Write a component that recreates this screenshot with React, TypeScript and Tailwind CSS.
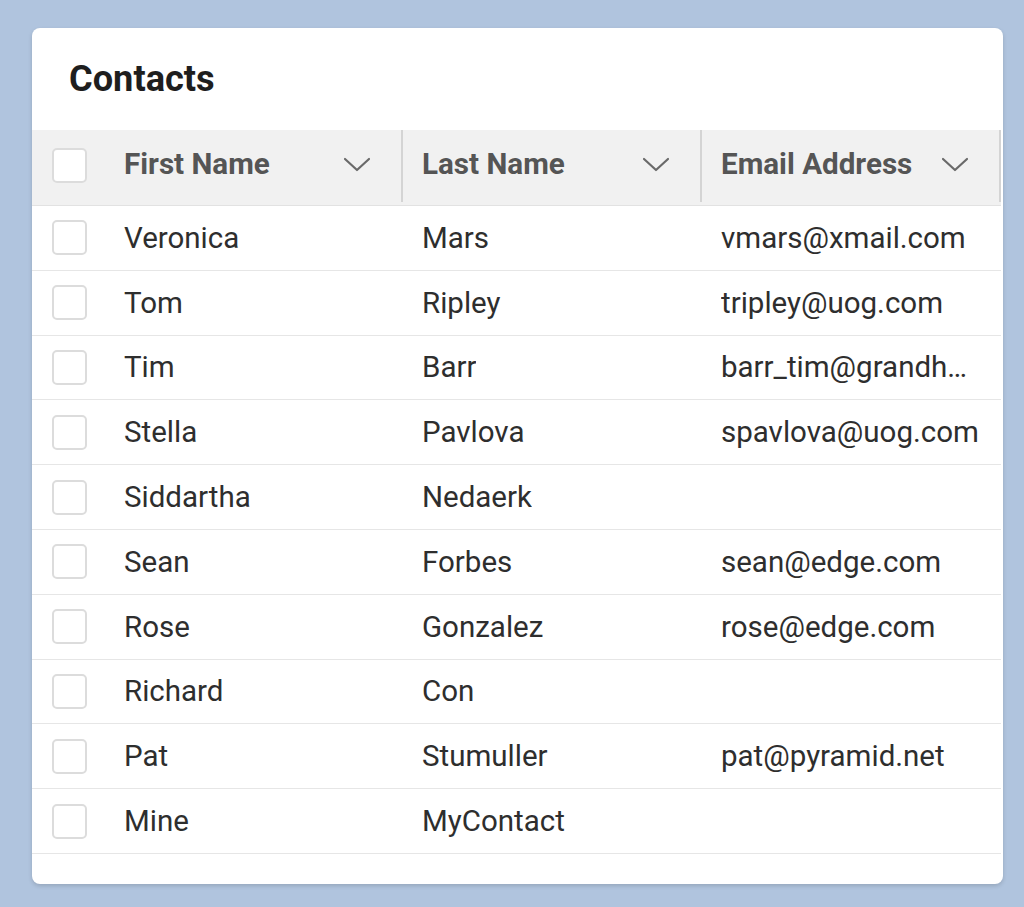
import React from "react";

const rows: [string, string, string][] = [
  ["Veronica", "Mars", "vmars@xmail.com"],
  ["Tom", "Ripley", "tripley@uog.com"],
  ["Tim", "Barr", "barr_tim@grandhotel.com"],
  ["Stella", "Pavlova", "spavlova@uog.com"],
  ["Siddartha", "Nedaerk", ""],
  ["Sean", "Forbes", "sean@edge.com"],
  ["Rose", "Gonzalez", "rose@edge.com"],
  ["Richard", "Con", ""],
  ["Pat", "Stumuller", "pat@pyramid.net"],
  ["Mine", "MyContact", ""],
];

function Checkbox() {
  return <div className="w-[35px] h-[35px] rounded-[5px] border-2 border-[#dcdcdc] bg-white" />;
}

function Chevron() {
  return (
    <svg width="28" height="16" viewBox="0 0 28 16" fill="none">
      <path d="M2 2 L14 13 L26 2" stroke="#6a6a6a" strokeWidth="2.2" strokeLinecap="round" strokeLinejoin="round" />
    </svg>
  );
}

function HeaderCell({ label, first }: { label: string; first?: boolean }) {
  return (
    <div className="flex items-center h-full">
      <div
        className={
          first
            ? "flex-1 flex items-center justify-between pl-5 pr-[30px] h-full pb-[6px]"
            : "flex-1 flex items-center justify-between pl-[19px] pr-[30px] h-full pb-[6px]"
        }
      >
        <span className="font-bold text-[#555555] text-[29.6px]">{label}</span>
        <Chevron />
      </div>
      <div className="w-[2px] h-[72px] self-start bg-[#d4d4d4]" />
    </div>
  );
}

export default function App() {
  return (
    <div
      className="w-[1024px] h-[907px] bg-[#b0c4de] pt-[28px] pl-[32px]"
      style={{ fontFamily: "Roboto, 'Noto Sans', sans-serif" }}
    >
      <div className="w-[971px] h-[856px] bg-white rounded-[8px] shadow-[0_2px_4px_rgba(0,0,0,0.15)] overflow-hidden">
        <div className="h-[102px] flex items-center pl-[37px] pt-[1px]">
          <h1 className="text-[36.2px] font-bold text-[#1e1e1e]">Contacts</h1>
        </div>
        <div className="w-[969px]">
          <div className="grid grid-cols-[72px_299px_299px_299px] h-[76px] bg-[#f1f1f1] border-b border-[#e2e2e2]">
            <div className="flex items-center pl-5 pb-[4px]">
              <Checkbox />
            </div>
            <HeaderCell label="First Name" first />
            <HeaderCell label="Last Name" />
            <HeaderCell label="Email Address" />
          </div>
          {rows.map(([f, l, e], i) => (
            <div
              key={i}
              className="grid grid-cols-[72px_299px_299px_299px] h-[64.8px] border-b border-[#e6e6e6] text-[29.5px] text-[#2e2e2e]"
            >
              <div className="flex items-center pl-5">
                <Checkbox />
              </div>
              <div className="flex items-center pl-5 pr-5 min-w-0">
                <span className="truncate">{f}</span>
              </div>
              <div className="flex items-center pl-[19px] pr-5 min-w-0">
                <span className="truncate">{l}</span>
              </div>
              <div className="flex items-center pl-[19px] pr-5 min-w-0">
                <span className="truncate">{e}</span>
              </div>
            </div>
          ))}
        </div>
      </div>
    </div>
  );
}
